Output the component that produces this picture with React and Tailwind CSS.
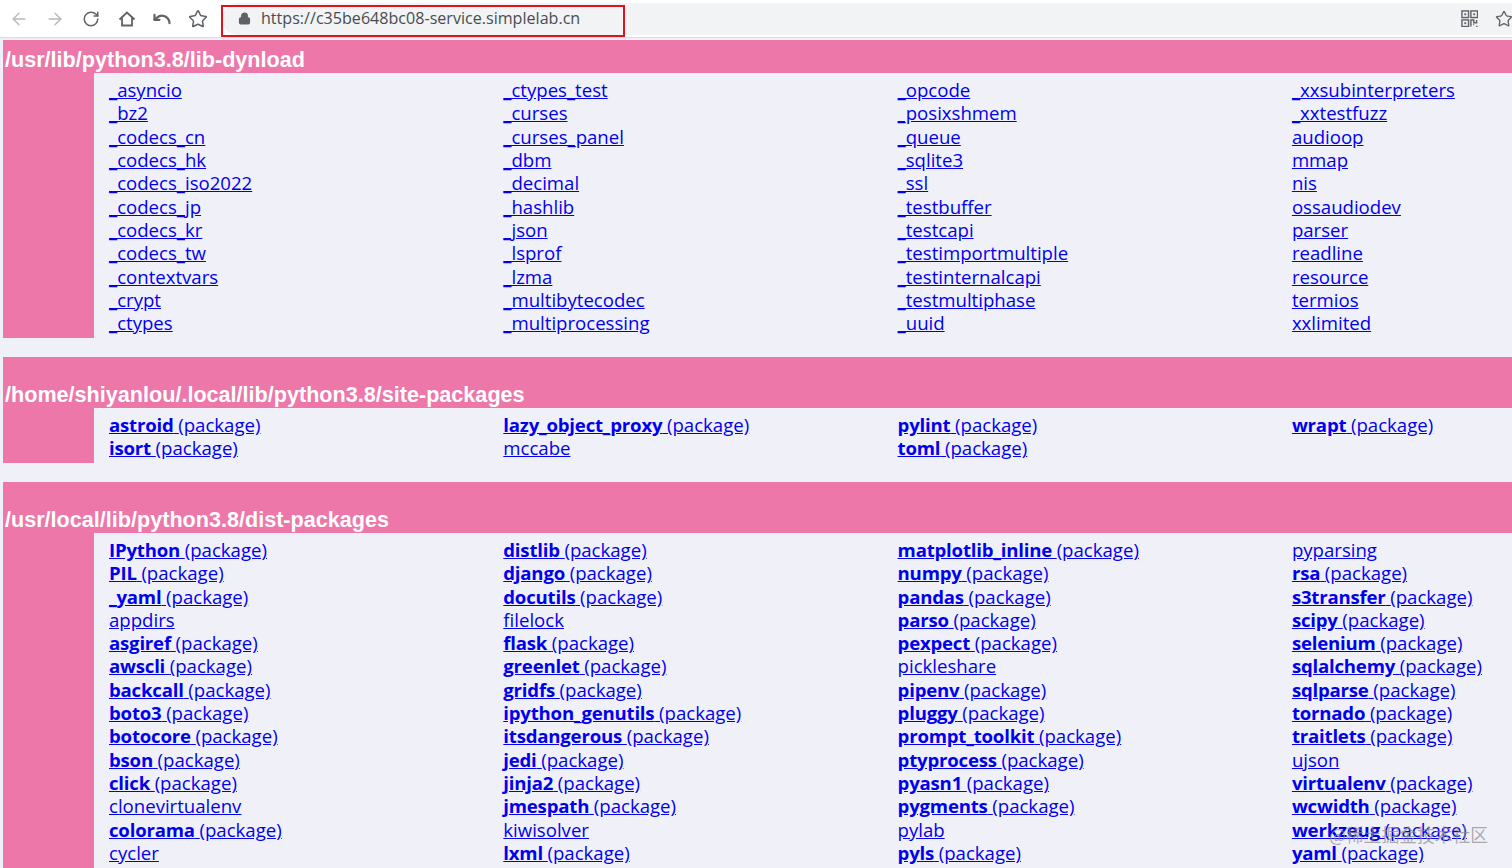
import React from 'react'
import { ArrowLeft, ArrowRight, RotateCw, Undo, Star, Lock } from 'lucide-react'

// a trailing * means the entry is a package
const sections = [
  {
    title: '/usr/lib/python3.8/lib-dynload',
    header: 'h-[33px]',
    columns: [
      ['_asyncio', '_bz2', '_codecs_cn', '_codecs_hk', '_codecs_iso2022', '_codecs_jp', '_codecs_kr', '_codecs_tw', '_contextvars', '_crypt', '_ctypes'],
      ['_ctypes_test', '_curses', '_curses_panel', '_dbm', '_decimal', '_hashlib', '_json', '_lsprof', '_lzma', '_multibytecodec', '_multiprocessing'],
      ['_opcode', '_posixshmem', '_queue', '_sqlite3', '_ssl', '_testbuffer', '_testcapi', '_testimportmultiple', '_testinternalcapi', '_testmultiphase', '_uuid'],
      ['_xxsubinterpreters', '_xxtestfuzz', 'audioop', 'mmap', 'nis', 'ossaudiodev', 'parser', 'readline', 'resource', 'termios', 'xxlimited'],
    ],
  },
  {
    title: '/home/shiyanlou/.local/lib/python3.8/site-packages',
    header: 'h-[51px]',
    columns: [
      ['astroid*', 'isort*'],
      ['lazy_object_proxy*', 'mccabe'],
      ['pylint*', 'toml*'],
      ['wrapt*'],
    ],
  },
  {
    title: '/usr/local/lib/python3.8/dist-packages',
    header: 'h-[51px]',
    columns: [
      ['IPython*', 'PIL*', '_yaml*', 'appdirs', 'asgiref*', 'awscli*', 'backcall*', 'boto3*', 'botocore*', 'bson*', 'click*', 'clonevirtualenv', 'colorama*', 'cycler'],
      ['distlib*', 'django*', 'docutils*', 'filelock', 'flask*', 'greenlet*', 'gridfs*', 'ipython_genutils*', 'itsdangerous*', 'jedi*', 'jinja2*', 'jmespath*', 'kiwisolver', 'lxml*'],
      ['matplotlib_inline*', 'numpy*', 'pandas*', 'parso*', 'pexpect*', 'pickleshare', 'pipenv*', 'pluggy*', 'prompt_toolkit*', 'ptyprocess*', 'pyasn1*', 'pygments*', 'pylab', 'pyls*'],
      ['pyparsing', 'rsa*', 's3transfer*', 'scipy*', 'selenium*', 'sqlalchemy*', 'sqlparse*', 'tornado*', 'traitlets*', 'ujson', 'virtualenv*', 'wcwidth*', 'werkzeug*', 'yaml*'],
    ],
  },
]

const HomeIcon = () => (
  <svg width="18" height="18" viewBox="0 0 18 18" fill="none" stroke="#5f6368" strokeWidth="1.8" className="ml-[18px]">
    <path d="M1.5 9.5 9 2.5l7.5 7" />
    <path d="M4 8v7.5h10V8" />
  </svg>
)

const QrIcon = () => (
  <svg width="17" height="17" viewBox="0 0 18 18" fill="none" stroke="#5f6368" strokeWidth="1.5">
    <rect x="1" y="1" width="7" height="7" />
    <rect x="10.5" y="1" width="7" height="7" />
    <rect x="1" y="10.5" width="7" height="7" />
    <rect x="3.5" y="3.5" width="2" height="2" fill="#5f6368" stroke="none" />
    <rect x="13" y="3.5" width="2" height="2" fill="#5f6368" stroke="none" />
    <rect x="3.5" y="13" width="2" height="2" fill="#5f6368" stroke="none" />
    <path d="M10.5 17.5v-7h3v3h3v-3M13 15.5h1M16 17.5h1.5" />
  </svg>
)

const Entry = ({ value }) => {
  const isPackage = value.endsWith('*')
  return (
    <div className="h-[23.3px] leading-[23.3px] whitespace-pre">
      <a href="#" className="text-[#0000ee] underline">
        {isPackage ? (
          <>
            <strong className="font-bold tracking-[-0.2px]">{value.slice(0, -1)} </strong>(package)
          </>
        ) : value}
      </a>
    </div>
  )
}

const Section = ({ title, header, columns }) => (
  <section className="mb-[18.6px]">
    <div className={`${header} flex items-end bg-[#ee77aa] pl-[2px] font-['Liberation_Sans',sans-serif] text-[21.6px] leading-[26px] font-bold text-white`}>
      {title}
    </div>
    <div className="flex">
      <div className="w-[91px] shrink-0 bg-[#ee77aa]" />
      <div className="grid grid-cols-[repeat(4,394.3px)] pt-[5.2px] pb-[3.7px] pl-[15px]">
        {columns.map((col, i) => (
          <div key={i}>
            {col.map((value) => <Entry key={value} value={value} />)}
          </div>
        ))}
      </div>
    </div>
  </section>
)

export default function App() {
  return (
    <div className="relative h-[868px] w-[1512px] overflow-hidden bg-[#f0f0f8] font-['Open_Sans',sans-serif] text-[18.6px]">
      <header className="flex h-[38px] items-center border-b border-[#dcdcdc] bg-white">
        <div className="flex w-[222px] shrink-0 items-center pl-[9px] text-[#5f6368]">
          <ArrowLeft size={20} strokeWidth={1.6} className="text-[#b5b8bb]" />
          <ArrowRight size={20} strokeWidth={1.6} className="ml-[16px] text-[#b5b8bb]" />
          <RotateCw size={18} strokeWidth={2} className="ml-[17px]" />
          <HomeIcon />
          <Undo size={20} strokeWidth={2.6} className="ml-[16px]" />
          <Star size={20} strokeWidth={1.8} className="ml-[16px]" />
        </div>
        <div className="flex h-[32px] flex-1 items-center rounded-l-full bg-[#f1f3f4] pl-[16px] pr-[3px]">
          <Lock size={13} strokeWidth={2.6} fill="#5f6368" className="text-[#5f6368]" />
          <span className="ml-[10px] text-[16.1px] text-[#4a4d50]">https://c35be648bc08-service.simplelab.cn</span>
          <div className="ml-auto flex">
            <QrIcon />
          </div>
          <Star size={18} strokeWidth={1.8} className="mr-[-4px] ml-[17px] text-[#5f6368]" />
        </div>
      </header>
      <div className="absolute top-[5px] left-[221px] h-[32px] w-[404px] border-2 border-[#e0121a]" />
      <main className="pt-[2px] pl-[3px]">
        {sections.map((s) => <Section key={s.title} {...s} />)}
      </main>
      <div className="absolute top-[821px] left-[1329px] font-['Noto_Sans_CJK_SC',sans-serif] text-[17.8px] text-[#8a8a8a]/70">
        @稀土掘金技术社区
      </div>
    </div>
  )
}
